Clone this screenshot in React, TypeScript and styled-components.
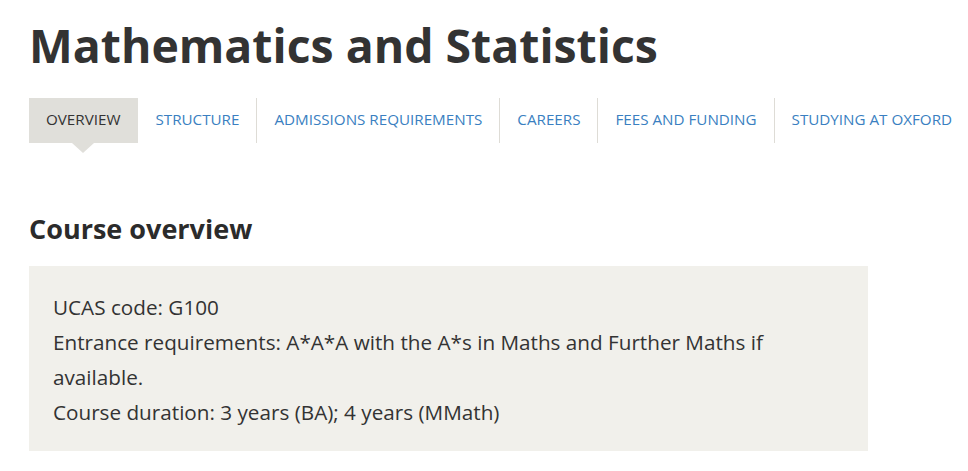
import React from "react";
import styled, { createGlobalStyle } from "styled-components";

const GlobalStyle = createGlobalStyle`
  html, body { margin: 0; padding: 0; background: #ffffff; }
  body { font-family: "Open Sans", "Noto Sans", sans-serif; color: #333333; }
`;

const Page = styled.main`
  padding: 18px 0 0 29px;
  overflow: hidden;
`;

const Title = styled.h1`
  margin: 0;
  font-size: 46.4px;
  line-height: 55px;
  font-weight: 700;
  color: #333333;
`;

const Nav = styled.nav`
  margin-top: 25px;
  display: flex;
  white-space: nowrap;
`;

const NavItem = styled.a<{ $active?: boolean }>`
  position: relative;
  display: flex;
  align-items: center;
  box-sizing: border-box;
  height: 45px;
  padding: 0 17px 3px;
  font-size: 15.2px;
  text-decoration: none;
  text-transform: uppercase;
  color: ${(p) => (p.$active ? "#333333" : "#3a7fc1")};
  background: ${(p) => (p.$active ? "#e0dfda" : "transparent")};
  border-right: 1px solid ${(p) => (p.$active ? "transparent" : "#dedcd6")};
  flex-shrink: 0;

  &::after {
    content: "";
    display: ${(p) => (p.$active ? "block" : "none")};
    position: absolute;
    left: 50%;
    bottom: -10px;
    margin-left: -11px;
    border-left: 11px solid transparent;
    border-right: 11px solid transparent;
    border-top: 10px solid #e0dfda;
  }
`;

const SectionTitle = styled.h2`
  margin: 70px 0 0;
  font-size: 27px;
  line-height: 32px;
  font-weight: 700;
  color: #2b2b2b;
`;

const InfoBox = styled.section`
  margin-top: 21px;
  width: 839px;
  box-sizing: border-box;
  padding: 24px 24px 21px;
  background: #f1f0eb;
`;

const InfoLine = styled.p`
  margin: 0;
  font-size: 20.7px;
  line-height: 35px;
  color: #333333;
`;

const tabs = [
  "Overview",
  "Structure",
  "Admissions requirements",
  "Careers",
  "Fees and funding",
  "Studying at Oxford",
];

export default function App() {
  return (
    <>
      <GlobalStyle />
      <Page>
        <Title>Mathematics and Statistics</Title>
        <Nav>
          {tabs.map((t, i) => (
            <NavItem key={t} href="#" $active={i === 0}>
              {t}
            </NavItem>
          ))}
        </Nav>
        <SectionTitle>Course overview</SectionTitle>
        <InfoBox>
          <InfoLine>UCAS code: G100</InfoLine>
          <InfoLine>
            Entrance requirements: A*A*A with the A*s in Maths and Further Maths if available.
          </InfoLine>
          <InfoLine>Course duration: 3 years (BA); 4 years (MMath)</InfoLine>
        </InfoBox>
      </Page>
    </>
  );
}
